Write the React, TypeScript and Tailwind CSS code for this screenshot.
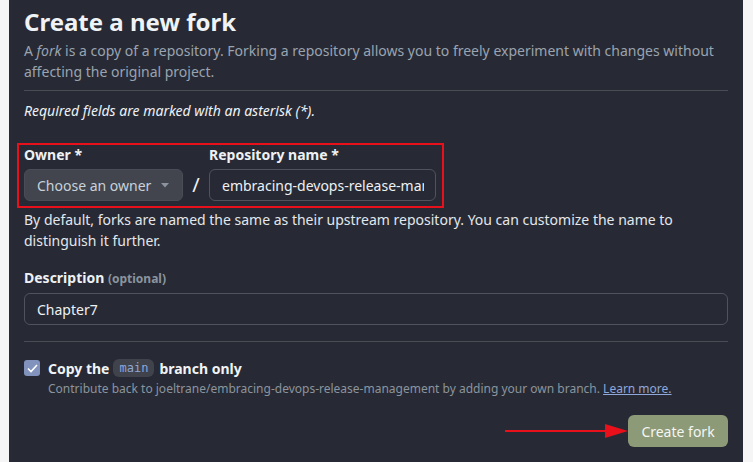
import React from "react";

export default function App() {
  return (
    <div
      className="w-[753px] h-[462px] bg-[#f4f5f4] flex overflow-hidden"
      style={{ fontFamily: '"Noto Sans", "Open Sans", sans-serif' }}
    >
      <div className="ml-[9px] w-[734px] h-[462px] bg-[#272a34] pl-[15px] pr-[15px] flex flex-col">
        <h1 className="mt-[7px] text-[24px] leading-[30px] font-bold text-[#f0f3f6]">
          Create a new fork
        </h1>
        <p className="mt-[3px] text-[14px] leading-[21px] text-[#9aa3b0]">
          A <em>fork</em> is a copy of a repository. Forking a repository allows you to freely experiment with changes without affecting the original project.
        </p>
        <div className="mt-[8px] border-t border-[#4a4c53]" />
        <p className="mt-[9px] text-[14px] leading-[21px] italic text-[#eef1f4]">
          Required fields are marked with an asterisk (*).
        </p>

        <div className="mt-[22px] -ml-[7px] w-[427px] border-2 border-[#e8101a] pl-[5px] pb-[5px] flex items-end">
          <div className="flex flex-col w-[159px]">
            <label className="text-[14px] leading-[20px] font-bold text-[#eef1f4]">Owner *</label>
            <div className="mt-[4px] h-[32px] w-[159px] rounded-[6px] bg-[#42454e] border border-[#4a4d56] flex items-center pl-[12px] pr-[13px] justify-between">
              <span className="text-[14px] text-[#c9d1d9]">Choose an owner</span>
              <svg width="8" height="5" viewBox="0 0 8 5">
                <path d="M0 0 L8 0 L4 4.5 Z" fill="#8b949e" />
              </svg>
            </div>
          </div>
          <div className="w-[26px] h-[32px] flex items-center justify-center text-[20px] text-[#f0f3f6]">
            /
          </div>
          <div className="flex flex-col w-[227px]">
            <label className="text-[14px] leading-[20px] font-bold text-[#eef1f4]">Repository name *</label>
            <div className="mt-[4px] h-[32px] w-[227px] rounded-[6px] border border-[#50535b] flex items-center pl-[12px] pr-[11px] overflow-hidden">
              <span className="text-[14px] text-[#eef1f4] whitespace-nowrap overflow-hidden">
                embracing-devops-release-management
              </span>
            </div>
          </div>
        </div>

        <p className="mt-[1px] text-[14px] leading-[21px] text-[#e3e7eb]">
          By default, forks are named the same as their upstream repository. You can customize the name to distinguish it further.
        </p>

        <div className="mt-[17px] text-[14px] leading-[20px] font-bold text-[#eef1f4]">
          Description <span className="text-[12px] text-[#8b949e]">(optional)</span>
        </div>
        <div className="mt-[4px] h-[32px] w-[704px] rounded-[6px] border border-[#50535b] flex items-center pl-[12px]">
          <span className="text-[14px] text-[#eef1f4]">Chapter7</span>
        </div>

        <div className="mt-[16px] border-t border-[#4a4c53]" />

        <div className="mt-[16px] flex items-center h-[20px]">
          <div className="w-[16px] h-[16px] rounded-[3px] bg-[#8193bd] flex items-center justify-center">
            <svg width="11" height="9" viewBox="0 0 11 9">
              <path d="M1 4.5 L4 7.5 L10 1" stroke="#ffffff" strokeWidth="1.6" fill="none" />
            </svg>
          </div>
          <span className="ml-[8px] text-[14px] font-bold text-[#f0f3f6]">Copy the</span>
          <span
            className="ml-[4px] h-[18px] px-[6px] rounded-[6px] bg-[#40434c] text-[12px] leading-[18px] text-[#8ea6da]"
            style={{ fontFamily: '"DejaVu Sans Mono", "Liberation Mono", monospace' }}
          >
            main
          </span>
          <span className="ml-[5px] text-[14px] font-bold text-[#f0f3f6]">branch only</span>
        </div>
        <p className="ml-[24px] mt-[2px] text-[12px] leading-[18px] text-[#8b949e]">
          Contribute back to joeltrane/embracing-devops-release-management by adding your own branch.{" "}
          <span className="underline text-[#8fa7d9]">Learn more.</span>
        </p>

        <div className="mt-[17px] flex items-center justify-end">
          <svg width="123" height="16" viewBox="0 0 123 16" className="mr-[0px]">
            <line x1="0" y1="8" x2="104" y2="8" stroke="#e8101a" strokeWidth="2" />
            <path d="M100 1 L123 8 L100 15 Z" fill="#e8101a" />
          </svg>
          <button className="h-[32px] w-[100px] rounded-[6px] bg-[#8d9a78] text-[14px] text-[#f4f6f2]">
            Create fork
          </button>
        </div>
      </div>
    </div>
  );
}
